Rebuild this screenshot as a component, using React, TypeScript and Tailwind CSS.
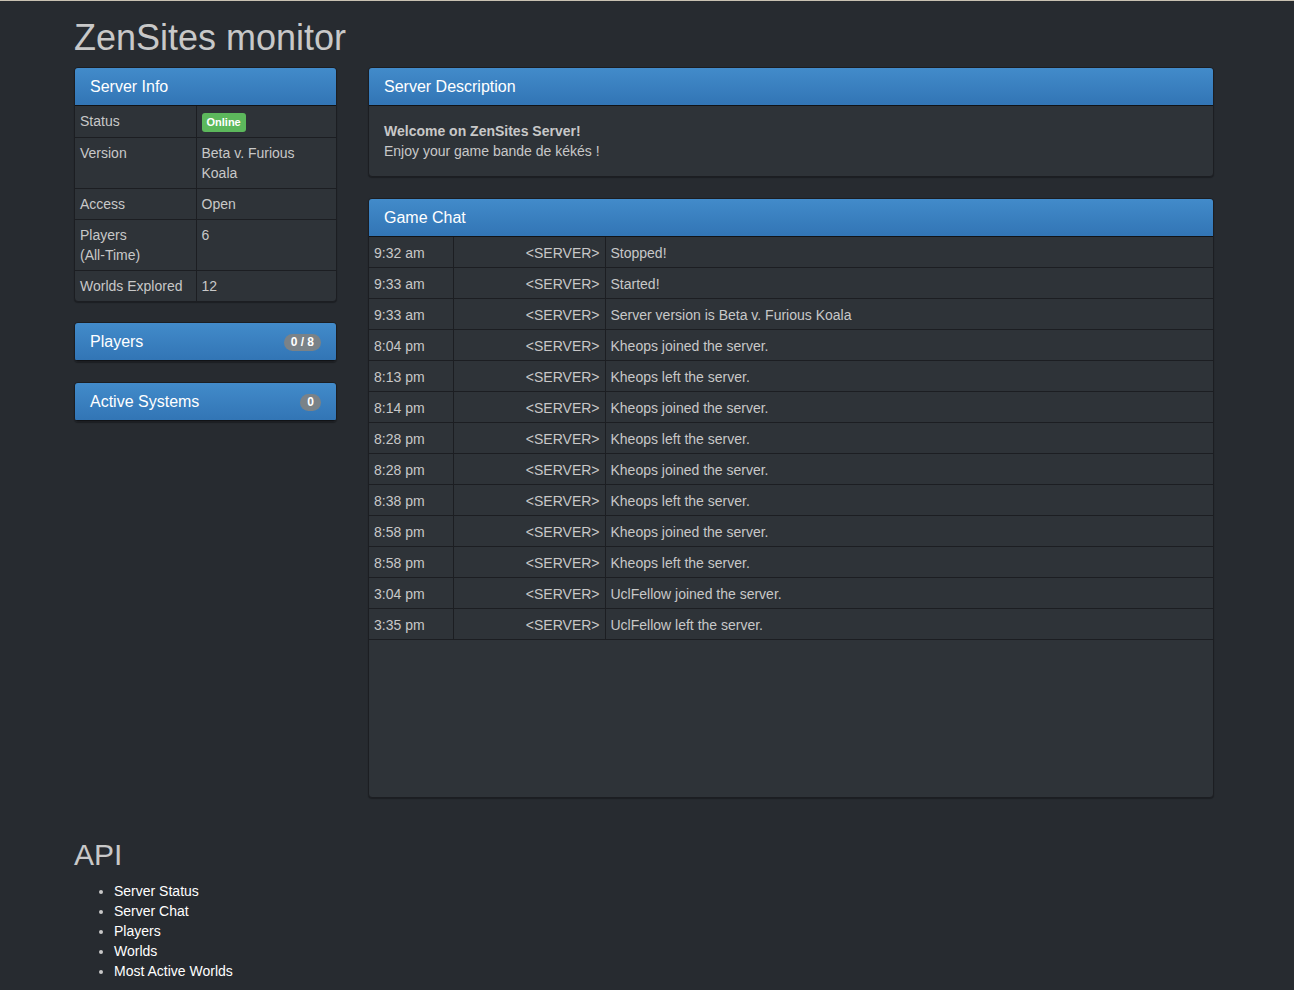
import React from "react";

const chat: [string, string][] = [
  ["9:32 am", "Stopped!"],
  ["9:33 am", "Started!"],
  ["9:33 am", "Server version is Beta v. Furious Koala"],
  ["8:04 pm", "Kheops joined the server."],
  ["8:13 pm", "Kheops left the server."],
  ["8:14 pm", "Kheops joined the server."],
  ["8:28 pm", "Kheops left the server."],
  ["8:28 pm", "Kheops joined the server."],
  ["8:38 pm", "Kheops left the server."],
  ["8:58 pm", "Kheops joined the server."],
  ["8:58 pm", "Kheops left the server."],
  ["3:04 pm", "UclFellow joined the server."],
  ["3:35 pm", "UclFellow left the server."],
];

function Heading({ title, badge }: { title: string; badge?: string }) {
  return (
    <div className="flex h-[38px] items-center justify-between border-b border-[#111316] bg-gradient-to-b from-[#428bca] to-[#3275b5] px-[15px] pt-[1px] text-[16px] leading-[18px] text-white">
      <span>{title}</span>
      {badge !== undefined && (
        <span className="rounded-[10px] bg-[#7a8288] px-[7px] py-[1px] text-[12px] font-bold leading-[15px] text-white">
          {badge}
        </span>
      )}
    </div>
  );
}

const info: [React.ReactNode, React.ReactNode][] = [
  ["Status", "online"],
  ["Version", "Beta v. Furious Koala"],
  ["Access", "Open"],
  [
    <>
      Players
      <br />
      (All-Time)
    </>,
    "6",
  ],
  ["Worlds Explored", "12"],
];

export default function App() {
  return (
    <div
      className="min-h-[990px] border-t border-[#c9c2b2] bg-[#272b30] text-[14px] leading-[20px] text-[#c8c8c8]"
      style={{ fontFamily: '"Liberation Sans", Arial, sans-serif' }}
    >
      <div className="ml-[74px] w-[1140px]">
        <h1 className="mb-[9px] pt-[17px] text-[36px] leading-[40px] text-[#c8c8c8]">ZenSites monitor</h1>
        <div className="flex gap-[31px]">
          {/* Left column */}
          <div className="flex w-[263px] flex-col gap-[20px]">
            <div className="overflow-hidden rounded-[4px] border border-[#1c1e22] bg-[#2e3338] shadow-[0_1px_1px_rgba(0,0,0,0.3)]">
              <Heading title="Server Info" />
              <table className="w-full border-collapse">
                <tbody>
                  {info.map(([k, v], i) => (
                    <tr key={i} className={i > 0 ? "border-t border-[#1c1e22]" : ""}>
                      <td className="w-[121px] border-r border-[#1c1e22] px-[5px] py-[5px] align-top">{k}</td>
                      <td className="px-[5px] py-[5px] align-top">
                        {v === "online" ? (
                          <span className="inline-block rounded-[3px] bg-[#5cb85c] px-[5px] py-[3px] text-[11px] font-bold leading-[13px] text-white">
                            Online
                          </span>
                        ) : (
                          v
                        )}
                      </td>
                    </tr>
                  ))}
                </tbody>
              </table>
            </div>
            <div className="overflow-hidden rounded-[4px] border border-[#1c1e22] shadow-[0_1px_1px_rgba(0,0,0,0.3)]">
              <Heading title="Players" badge="0 / 8" />
            </div>
            <div className="overflow-hidden rounded-[4px] border border-[#1c1e22] shadow-[0_1px_1px_rgba(0,0,0,0.3)]">
              <Heading title="Active Systems" badge="0" />
            </div>
          </div>

          {/* Right column */}
          <div className="flex w-[846px] flex-col gap-[21px]">
            <div className="overflow-hidden rounded-[4px] border border-[#1c1e22] bg-[#2e3338] shadow-[0_1px_1px_rgba(0,0,0,0.3)]">
              <Heading title="Server Description" />
              <div className="p-[15px]">
                <div className="font-bold">Welcome on ZenSites Server!</div>
                <div>Enjoy your game bande de kékés !</div>
              </div>
            </div>
            <div className="h-[600px] overflow-hidden rounded-[4px] border border-[#1c1e22] bg-[#2e3338] shadow-[0_1px_1px_rgba(0,0,0,0.3)]">
              <Heading title="Game Chat" />
              <table className="w-full border-collapse">
                <tbody>
                  {chat.map(([t, m], i) => (
                    <tr key={i} className="border-b border-[#1c1e22]">
                      <td className="w-[84px] border-r border-[#1c1e22] px-[5px] pt-[6px] pb-[4px]">{t}</td>
                      <td className="w-[152px] border-r border-[#1c1e22] px-[5px] pt-[6px] pb-[4px] text-right">&lt;SERVER&gt;</td>
                      <td className="px-[5px] pt-[6px] pb-[4px]">{m}</td>
                    </tr>
                  ))}
                </tbody>
              </table>
            </div>
          </div>
        </div>

        <h2 className="mt-[40px] mb-[10px] text-[30px] leading-[33px] text-[#c8c8c8]">API</h2>
        <ul className="list-disc pl-[40px] text-white marker:text-[#c8c8c8]">
          <li>Server Status</li>
          <li>Server Chat</li>
          <li>Players</li>
          <li>Worlds</li>
          <li>Most Active Worlds</li>
        </ul>
      </div>
    </div>
  );
}
